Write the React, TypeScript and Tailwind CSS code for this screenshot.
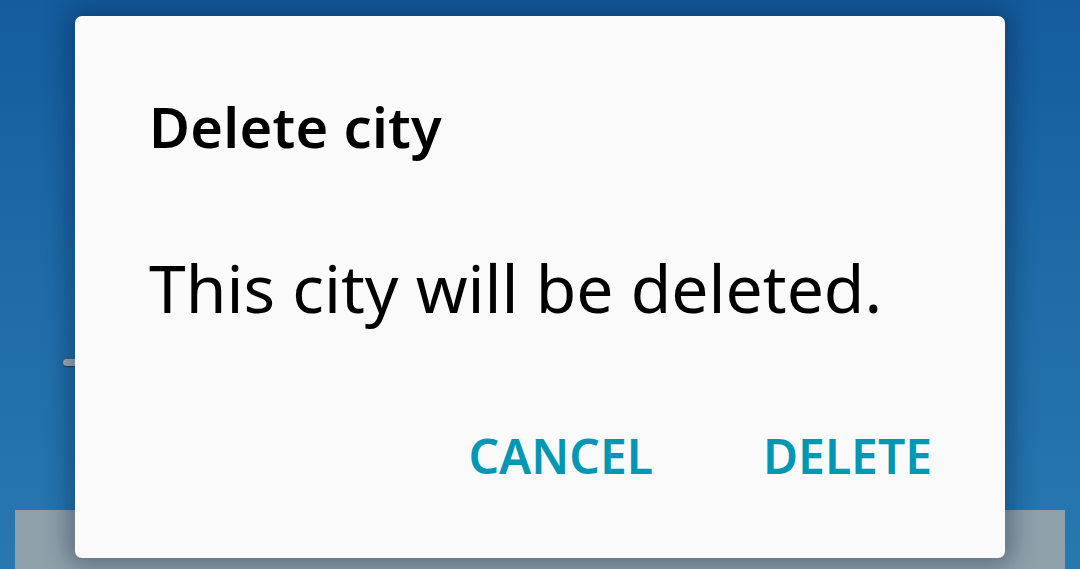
export default function App() {
  return (
    <div className="relative h-[569px] w-[1080px] overflow-hidden bg-gradient-to-b from-[#145c9e] via-[#1f6ca8] to-[#2878b0] font-['Noto_Sans',sans-serif]">
      {/* background content under the dim */}
      <div className="flex h-full flex-col">
        <div className="h-[359px]" />
        <div className="ml-[63px] h-[7px] w-[20px] rounded-full bg-[#a9b1b8] shadow-[0_1px_1px_rgba(0,40,80,0.6)]" />
        <div className="flex-1" />
        <div className="mx-[15px] h-[59px] bg-[#8fa1ab]" />
      </div>

      {/* dialog */}
      <div className="absolute left-[75px] top-[16px] flex h-[542px] w-[930px] flex-col rounded-[7px] bg-[#fafafa] shadow-[0_0_24px_8px_rgba(0,20,50,0.35)]">
        <div className="pl-[74px] pt-[82px] text-[56px] font-semibold leading-none tracking-[0.3px] text-black">
          Delete city
        </div>
        <div className="pl-[74px] pt-[100px] text-[66px] leading-none text-black">
          This city will be deleted.
        </div>
        <div className="mt-auto flex justify-end gap-[110px] pb-[78px] pr-[73px] text-[48px] font-semibold leading-none text-[#0097b3]">
          <span>CANCEL</span>
          <span>DELETE</span>
        </div>
      </div>
    </div>
  );
}
